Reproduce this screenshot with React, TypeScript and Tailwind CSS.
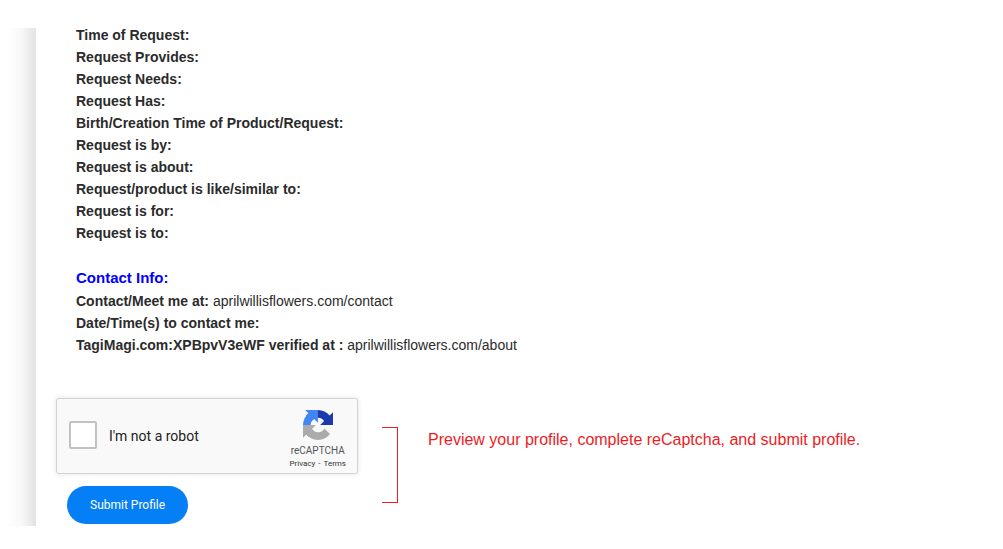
const requestFields = [
  "Time of Request:",
  "Request Provides:",
  "Request Needs:",
  "Request Has:",
  "Birth/Creation Time of Product/Request:",
  "Request is by:",
  "Request is about:",
  "Request/product is like/similar to:",
  "Request is for:",
  "Request is to:",
];

const contactFields = [
  { label: "Contact/Meet me at:", value: "aprilwillisflowers.com/contact" },
  { label: "Date/Time(s) to contact me:", value: "" },
  { label: "TagiMagi.com:XPBpvV3eWF verified at :", value: "aprilwillisflowers.com/about" },
];

function RecaptchaLogo() {
  return (
    <svg viewBox="0 0 64 64" className="size-[30px]" aria-hidden="true">
      <path
        fill="#1c3aa9"
        d="M64 31.955l-.033-1.37V4.687l-7.16 7.16C50.948 4.674 42.033.093 32.05.093c-10.4 0-19.622 4.96-25.458 12.64l11.736 11.86a15.55 15.55 0 0 1 4.754-5.334c2.05-1.6 4.952-2.906 8.968-2.906.485 0 .86.057 1.135.163 4.976.393 9.288 3.14 11.828 7.124l-8.307 8.307L64 31.953"
      />
      <path
        fill="#4285f4"
        d="M31.862.094l-1.37.033H4.594l7.16 7.16C4.58 13.147 0 22.06 0 32.046c0 10.4 4.96 19.622 12.64 25.458L24.5 45.768a15.55 15.55 0 0 1-5.334-4.754c-1.6-2.05-2.906-4.952-2.906-8.968 0-.485.057-.86.163-1.135.393-4.976 3.14-9.288 7.124-11.828l8.307 8.307L31.86.095"
      />
      <path
        fill="#ababab"
        d="M.001 32.045l.033 1.37v25.898l7.16-7.16c5.86 7.173 14.774 11.754 24.76 11.754 10.4 0 19.622-4.96 25.458-12.64l-11.736-11.86a15.55 15.55 0 0 1-4.754 5.334c-2.05 1.6-4.952 2.906-8.968 2.906-.485 0-.86-.057-1.135-.163-4.976-.393-9.288-3.14-11.828-7.124l8.307-8.307c-10.522.04-22.4.066-27.295-.005"
      />
    </svg>
  );
}

function Recaptcha() {
  return (
    <div className="flex h-[76px] w-[302px] items-center rounded-[3px] border border-[#d3d3d3] bg-[#f9f9f9] pr-[11px] pl-3 font-[Roboto,sans-serif] shadow-[0_0_4px_1px_rgba(0,0,0,0.08)]">
      <input
        id="robot"
        type="checkbox"
        className="-mt-0.5 size-7 appearance-none rounded-[2px] border-2 border-[#c1c1c1] bg-white"
      />
      <label htmlFor="robot" className="ml-3 text-sm text-[#222]">
        I'm not a robot
      </label>
      <div className="ml-auto flex flex-col items-center pt-2 text-[#555]">
        <RecaptchaLogo />
        <span className="mt-1 text-[10px] leading-[14px]">reCAPTCHA</span>
        <div className="flex gap-[3px] text-[8px] leading-3 text-[#333]">
          <a href="#privacy">Privacy</a>
          <span>-</span>
          <a href="#terms">Terms</a>
        </div>
      </div>
    </div>
  );
}

export default function App() {
  return (
    <div className="flex min-h-screen bg-white pt-7 pb-[23px] font-['Liberation_Sans',Arial,sans-serif]">
      <div className="w-9 shrink-0 bg-linear-to-r from-white from-15% via-[#f8f8f8] via-60% to-[#e2e2e2]" />
      <main className="-mt-1 min-w-0 flex-1 pl-5">
        <section className="pl-5 text-sm leading-[22px] text-[#2b2b2b]">
          {requestFields.map((field) => (
            <p key={field} className="font-bold">
              {field}
            </p>
          ))}
          <h2 className="mt-[22px] text-[15px] leading-6 font-bold text-[#0000ff]">Contact Info:</h2>
          {contactFields.map(({ label, value }) => (
            <p key={label}>
              <b>{label}</b> {value}
            </p>
          ))}
        </section>
        <form className="mt-[42px] flex items-start" onSubmit={(e) => e.preventDefault()}>
          <div>
            <Recaptcha />
            <button
              type="submit"
              className="mt-3 ml-[11px] h-[38px] rounded-full bg-[#057ff5] px-[23px] font-[Roboto,sans-serif] text-xs text-white"
            >
              Submit Profile
            </button>
          </div>
          <div className="mt-[29px] ml-6 h-[76px] w-4 border-y border-r border-[#ed1c24]" />
          <p className="mt-[30px] ml-[30px] text-base text-[#ed1c24]">
            Preview your profile, complete reCaptcha, and submit profile.
          </p>
        </form>
      </main>
    </div>
  );
}
